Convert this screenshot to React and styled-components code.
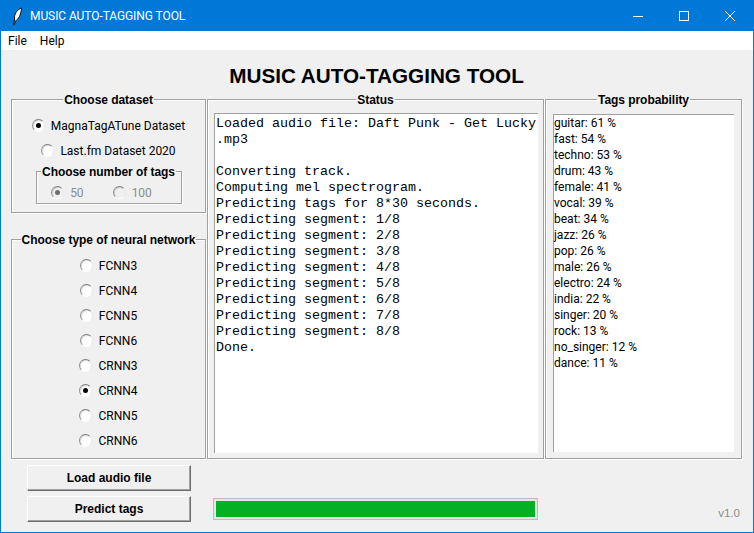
import React from 'react';
import styled, { createGlobalStyle } from 'styled-components';

const GlobalStyle = createGlobalStyle`
  html, body {
    margin: 0;
    padding: 0;
    background: #f0f0f0;
  }
`

const Window = styled.div`
  box-sizing: border-box;
  display: flex;
  flex-direction: column;
  width: 754px;
  height: 533px;
  overflow: hidden;
  border: 1px solid #0078d7;
  border-top: 0;
  background: #f0f0f0;
  font-family: Roboto, "Noto Sans", sans-serif;
  font-size: 12px;
  color: #000;
`

const TitleBar = styled.div`
  display: flex;
  align-items: center;
  flex: none;
  height: 31px;
  background: #0078d7;
  color: #fff;
`

const AppIcon = styled.svg`
  flex: none;
  width: 16px;
  height: 18px;
  margin: 0 5px 0 8px;
`

const WindowTitle = styled.span`
  flex: 1;
  font-size: 12px;
  letter-spacing: -0.08px;
`

const WindowButton = styled.div`
  display: flex;
  align-items: center;
  justify-content: center;
  width: 46px;
  height: 31px;
`

const MenuBar = styled.div`
  display: flex;
  flex: none;
  gap: 13px;
  align-items: center;
  height: 19px;
  padding-left: 7px;
  background: #fff;
`

const AppHeading = styled.h1`
  flex: none;
  height: 40px;
  margin: 0;
  padding-right: 1px;
  font-family: "Liberation Sans", Arial, sans-serif;
  font-size: 20.7px;
  font-weight: 700;
  line-height: 52px;
  text-align: center;
`

const Columns = styled.div`
  display: grid;
  flex: none;
  grid-template-columns: 195px 337px 197px;
  gap: 1px;
  height: 369px;
  margin-left: 10px;
`

const LeftColumn = styled.div`
  display: flex;
  flex-direction: column;
  justify-content: space-between;
`

const Frame = styled.fieldset`
  box-sizing: border-box;
  flex: none;
  min-width: 0;
  height: ${p => p.$height || 'auto'};
  margin: 0;
  padding: ${p => p.$padding || '0'};
  border: 1px solid #a0a0a0;
  box-shadow: 1px 1px 0 #fff, inset 1px 1px 0 #fff;
`

const Legend = styled.legend`
  margin: 0 auto;
  padding: 2px 1px 0;
  font-family: "Liberation Sans", Arial, sans-serif;
  font-size: 12px;
  font-weight: 700;
  line-height: 16px;
  letter-spacing: -0.05px;
`

const RadioList = styled.div`
  display: flex;
  flex-direction: column;
  align-items: center;
`

const RadioRow = styled.div`
  display: flex;
  align-items: center;
  gap: 6px;
  height: 25px;
  color: ${p => p.$disabled ? '#8c8c8c' : '#000'};
`

const RadioMark = styled.span`
  box-sizing: border-box;
  position: relative;
  flex: none;
  width: 13px;
  height: 13px;
  border: 1px solid;
  border-color: #7d7d7d #e8e8e8 #fff #8f8f8f;
  border-radius: 50%;
  background: ${p => p.$disabled ? '#f0f0f0' : '#fff'};
  box-shadow: inset 1px 1px 0 rgba(0, 0, 0, 0.12);

  &::after {
    content: '';
    display: ${p => p.$checked ? 'block' : 'none'};
    position: absolute;
    top: 3px;
    left: 3px;
    width: 5px;
    height: 5px;
    border-radius: 50%;
    background: ${p => p.$disabled ? '#6d6d6d' : '#000'};
  }
`

const TagCountFrame = styled(Frame)`
  width: 146px;
  height: 42px;
  margin: -1px auto 0;
`

const TagCountRow = styled.div`
  display: flex;
  gap: 29px;
  justify-content: center;
  padding-right: 14px;
`

const StatusText = styled.div`
  box-sizing: border-box;
  height: 340px;
  margin: 5px 5px 0 6px;
  padding: 2px 0 0 1px;
  border-top: 1px solid #a0a0a0;
  border-left: 1px solid #a0a0a0;
  background: #fff;
  font-family: "Liberation Mono", "Courier New", monospace;
  font-size: 13.33px;
  line-height: 16px;
  white-space: pre;
`

const TagList = styled.div`
  box-sizing: border-box;
  height: 338px;
  margin: 6px 7px 0 7px;
  padding: 0;
  border-top: 1px solid #a0a0a0;
  border-left: 1px solid #a0a0a0;
  background: #fff;
`

const TagLine = styled.div`
  height: 16px;
  line-height: 16px;
`

const Footer = styled.div`
  display: grid;
  flex: 1;
  grid-template-columns: 164px 325px 1fr;
  column-gap: 22px;
  padding: 6px 0 0 26px;
`

const ButtonColumn = styled.div`
  display: flex;
  flex-direction: column;
  gap: 5px;
`

const ActionButton = styled.button`
  box-sizing: border-box;
  width: 164px;
  height: 26px;
  padding: 0;
  border: 1px solid;
  border-color: #fff #6d6d6d #6d6d6d #fff;
  box-shadow: inset -1px -1px 0 #a0a0a0;
  background: #f0f0f0;
  font-family: "Liberation Sans", Arial, sans-serif;
  font-size: 12px;
  font-weight: 700;
  color: #000;
`

const ProgressTrack = styled.div`
  box-sizing: border-box;
  align-self: end;
  height: 22px;
  margin-bottom: 12px;
  padding: 2px;
  border: 1px solid #bcbcbc;
  background: #e6e6e6;
`

const ProgressFill = styled.div`
  height: 100%;
  background: #06b025;
`

const Version = styled.div`
  align-self: end;
  justify-self: end;
  margin: 0 13px 12px 0;
  font-family: "Liberation Sans", Arial, sans-serif;
  font-size: 11.5px;
  line-height: 13px;
  color: #8c8c8c;
`

const Radio = ({ label, checked, disabled }) => (
  <RadioRow $disabled={disabled}>
    <RadioMark $checked={checked} $disabled={disabled} />
    {label}
  </RadioRow>
)

const networks = ['FCNN3', 'FCNN4', 'FCNN5', 'FCNN6', 'CRNN3', 'CRNN4', 'CRNN5', 'CRNN6']

const tags = [
  'guitar: 61 %', 'fast: 54 %', 'techno: 53 %', 'drum: 43 %', 'female: 41 %', 'vocal: 39 %',
  'beat: 34 %', 'jazz: 26 %', 'pop: 26 %', 'male: 26 %', 'electro: 24 %', 'india: 22 %',
  'singer: 20 %', 'rock: 13 %', 'no_singer: 12 %', 'dance: 11 %'
]

const statusLog = `Loaded audio file: Daft Punk - Get Lucky
.mp3

Converting track.
Computing mel spectrogram.
Predicting tags for 8*30 seconds.
Predicting segment: 1/8
Predicting segment: 2/8
Predicting segment: 3/8
Predicting segment: 4/8
Predicting segment: 5/8
Predicting segment: 6/8
Predicting segment: 7/8
Predicting segment: 8/8
Done.`

const App = () => (
  <Window>
    <GlobalStyle />
    <TitleBar>
      <AppIcon viewBox="0 0 16 18">
        <path d="M12.5 1C9 2 6 5.5 5.5 10v3l-1 4.5h1l.8-3.5C9.5 12.5 12 8 12.5 1z" fill="#fff" stroke="#111" strokeLinejoin="round" />
      </AppIcon>
      <WindowTitle>MUSIC AUTO-TAGGING TOOL</WindowTitle>
      <WindowButton>
        <svg width="10" height="10" viewBox="0 0 10 10"><path d="M0 5.5h10" stroke="#fff" /></svg>
      </WindowButton>
      <WindowButton>
        <svg width="10" height="10" viewBox="0 0 10 10"><rect x=".5" y=".5" width="9" height="9" fill="none" stroke="#fff" /></svg>
      </WindowButton>
      <WindowButton>
        <svg width="10" height="10" viewBox="0 0 10 10"><path d="M0 0l10 10M10 0L0 10" stroke="#fff" /></svg>
      </WindowButton>
    </TitleBar>
    <MenuBar>
      <span>File</span>
      <span>Help</span>
    </MenuBar>
    <AppHeading>MUSIC AUTO-TAGGING TOOL</AppHeading>
    <Columns>
      <LeftColumn>
        <Frame $height="123px" $padding="5px 0 0">
          <Legend>Choose dataset</Legend>
          <RadioList>
            <Radio label="MagnaTagATune Dataset" checked />
            <Radio label="Last.fm Dataset 2020" />
          </RadioList>
          <TagCountFrame>
            <Legend>Choose number of tags</Legend>
            <TagCountRow>
              <Radio label="50" checked disabled />
              <Radio label="100" disabled />
            </TagCountRow>
          </TagCountFrame>
        </Frame>
        <Frame $height="229px" $padding="5px 0 0">
          <Legend>Choose type of neural network</Legend>
          <RadioList>
            {networks.map(name => (
              <Radio key={name} label={name} checked={name === 'CRNN4'} />
            ))}
          </RadioList>
        </Frame>
      </LeftColumn>
      <Frame>
        <Legend>Status</Legend>
        <StatusText>{statusLog}</StatusText>
      </Frame>
      <Frame>
        <Legend>Tags probability</Legend>
        <TagList>
          {tags.map(tag => <TagLine key={tag}>{tag}</TagLine>)}
        </TagList>
      </Frame>
    </Columns>
    <Footer>
      <ButtonColumn>
        <ActionButton>Load audio file</ActionButton>
        <ActionButton>Predict tags</ActionButton>
      </ButtonColumn>
      <ProgressTrack>
        <ProgressFill />
      </ProgressTrack>
      <Version>v1.0</Version>
    </Footer>
  </Window>
)

export default App;
